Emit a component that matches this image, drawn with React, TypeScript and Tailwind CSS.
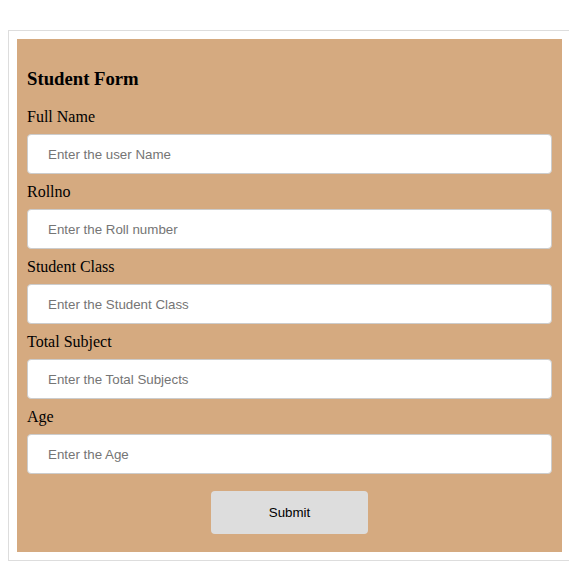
import React, { useState } from 'react';

// --- FIELDS ---
const fields = [
    { name: 'name', label: 'Full Name', placeholder: 'Enter the user Name' },
    { name: 'rollno', label: 'Rollno', placeholder: 'Enter the Roll number' },
    { name: 'studentClass', label: 'Student Class', placeholder: 'Enter the Student Class' },
    { name: 'totalSubject', label: 'Total Subject', placeholder: 'Enter the Total Subjects' },
    { name: 'age', label: 'Age', placeholder: 'Enter the Age' },
];

const App: React.FC = () => {
    const [values, setValues] = useState<Record<string, string>>({});

    const handleChange = (name: string, value: string) => {
        setValues(prev => ({ ...prev, [name]: value }));
    };

    return (
        <div className="w-full h-[562px] overflow-hidden bg-white pt-[30px] pl-[8px] font-['Liberation_Serif',serif] text-black">
            <div className="w-[580px] border border-[#dddddd] p-2">
                <form
                    onSubmit={e => e.preventDefault()}
                    className="w-[545px] bg-[#d5aa80] px-[10px] pt-[29px] pb-[18px] flex flex-col"
                >
                    <h3 className="h-[22px] leading-[22px] text-[18.72px] font-bold">Student Form</h3>

                    {fields.map((f, i) => (
                        <div key={f.name} className={i === 0 ? 'mt-[18px]' : 'mt-[9px]'}>
                            <label htmlFor={f.name} className="block h-[18px] leading-[18px] text-[16px]">
                                {f.label}
                            </label>
                            <input
                                id={f.name}
                                type="text"
                                value={values[f.name] ?? ''}
                                onChange={e => handleChange(f.name, e.target.value)}
                                placeholder={f.placeholder}
                                className="mt-[8px] block w-full h-[40px] bg-white border border-[#cccccc] rounded-[4px] pl-[20px] font-['Liberation_Sans',Arial,sans-serif] text-[13.333px] text-black placeholder:text-[#757575] outline-none"
                            />
                        </div>
                    ))}

                    <button
                        type="submit"
                        className="mt-[17px] mx-auto w-[157px] h-[43px] bg-[#dddddd] rounded-[4px] font-['Liberation_Sans',Arial,sans-serif] text-[13.333px] text-black"
                    >
                        Submit
                    </button>
                </form>
            </div>
        </div>
    );
};

export default App;
